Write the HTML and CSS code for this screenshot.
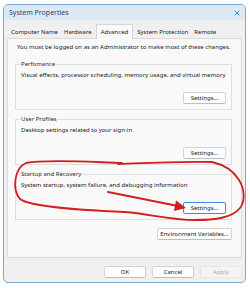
FILE: index.html
```html
<!DOCTYPE html>
<html lang="en">
<head>
  <meta charset="UTF-8" />
  <title>System Properties</title>
  <link rel="stylesheet" href="styles.css">
</head>
<body>

  <section class="window">
    <div class="titlebar">
      <span class="title">System Properties</span>
      <svg class="close" width="6" height="6" viewBox="0 0 6 6">
        <path d="M0.5 0.5 L5.5 5.5 M5.5 0.5 L0.5 5.5" />
      </svg>
    </div>

    <div class="body">
      <div class="tabs">
        <div class="tab">Computer Name</div>
        <div class="tab">Hardware</div>
        <div class="tab active">Advanced</div>
        <div class="tab">System Protection</div>
        <div class="tab">Remote</div>
      </div>

      <div class="panel">
        <p class="note">You must be logged on as an Administrator to make most of these changes.</p>

        <fieldset class="group">
          <legend>Perfomance</legend>
          <p>Visual effects, processor scheduling, memory usage, and virtual memory</p>
          <div class="actions"><button>Settings...</button></div>
        </fieldset>

        <fieldset class="group">
          <legend>User Profiles</legend>
          <p>Desktop settings related to your sign-in</p>
          <div class="actions"><button>Settings...</button></div>
        </fieldset>

        <fieldset class="group">
          <legend>Startup and Recovery</legend>
          <p>System startup, system failure, and debugging information</p>
          <div class="actions"><button class="focused">Settings...</button></div>
        </fieldset>

        <div class="env">
          <button class="wide">Environment Variables...</button>
        </div>
      </div>

      <div class="footer">
        <button>OK</button>
        <button>Cancel</button>
        <button disabled>Apply</button>
      </div>
    </div>
  </section>

  <!-- red marker drawn over the screenshot -->
  <svg class="annotation" width="250" height="288" viewBox="0 0 250 288">
    <path class="loop" d="M122 163 C90 162 45 159 26 163 C14 168 12 190 20 199 C30 207 80 210 125 212 C150 214 170 220 195 220 C215 220 232 218 240 208 C246 200 244 188 239 180 C233 170 225 165 212 162 C190 161 150 163 118 164" />
    <path class="loop" d="M108 192 L178 206" />
    <polygon class="head" points="186,208 176,200.5 174,211" />
  </svg>

</body>
</html>
```

FILE: styles.css
```css
* {
  margin: 0;
  padding: 0;
  box-sizing: border-box;
}
body {
  font-family: 'Noto Sans', 'Open Sans', sans-serif;
  font-size: 6px;
  color: #1b1b1b;
  background: #fff;
  padding: 4px 0 0 3px;
}
.window {
  width: 243px;
  height: 279px;
  border: 1px solid #78a9d8;
  border-radius: 5px;
  background: #f0f0f0;
  overflow: hidden;
  display: flex;
  flex-direction: column;
}
.titlebar {
  height: 15px;
  background: #dce8f4;
  display: flex;
  align-items: center;
  justify-content: space-between;
  padding: 0 5px 0 5px;
}
.title {
  font-size: 7px;
  color: #23476e;
}
.close path {
  stroke: #3c86cf;
  stroke-width: 0.9;
  fill: none;
}
.body {
  padding: 3px 3px 0 3px;
}
.tabs {
  display: flex;
  height: 15px;
  align-items: flex-end;
  padding-left: 1px;
}
.tab {
  height: 12px;
  line-height: 12px;
  padding: 0 3px;
  color: #222;
}
.tab.active {
  height: 15px;
  line-height: 14px;
  padding: 0 4px;
  margin: 0 1px;
  background: #f9f9f9;
  border: 1px solid #d6d6d6;
  border-bottom: none;
  position: relative;
  top: 1px;
}
.panel {
  height: 220px;
  background: #f9f9f9;
  border: 1px solid #d9d9d9;
  padding: 4px 9px 0 7px;
}
.note {
  line-height: 8px;
  padding-left: 2px;
  margin-bottom: 9px;
}
.group {
  border: 1px solid #dedede;
  padding: 3px 5px 5px 5px;
  margin-bottom: 5px;
}
.group legend {
  line-height: 8px;
  color: #2b2b2b;
  padding: 0 1px;
  margin-left: -1px;
}
.group p {
  line-height: 8px;
}
.actions {
  display: flex;
  justify-content: flex-end;
  margin-top: 13px;
}
button {
  font-family: inherit;
  font-size: 6px;
  color: #1b1b1b;
  width: 43px;
  height: 12px;
  background: #fdfdfd;
  border: 1px solid #d3d3d3;
  border-bottom-color: #bdbdbd;
  border-radius: 2px;
}
button.focused {
  border: 1px solid #3d8ed6;
}
button.wide {
  width: 75px;
}
button:disabled {
  background: #f4f4f4;
  color: #a8a8a8;
  border-color: #e6e6e6;
}
.env {
  display: flex;
  justify-content: flex-end;
  margin-top: 8px;
}
.footer {
  display: flex;
  justify-content: flex-end;
  gap: 6px;
  margin-top: 8px;
  padding-right: 0;
}
.footer button {
  width: 42px;
}
.annotation {
  position: absolute;
  top: 0;
  left: 0;
  pointer-events: none;
}
.annotation .loop {
  fill: none;
  stroke: #d21f1f;
  stroke-width: 1.8;
  stroke-linecap: round;
  stroke-linejoin: round;
}
.annotation .head {
  fill: #d21f1f;
}
```
